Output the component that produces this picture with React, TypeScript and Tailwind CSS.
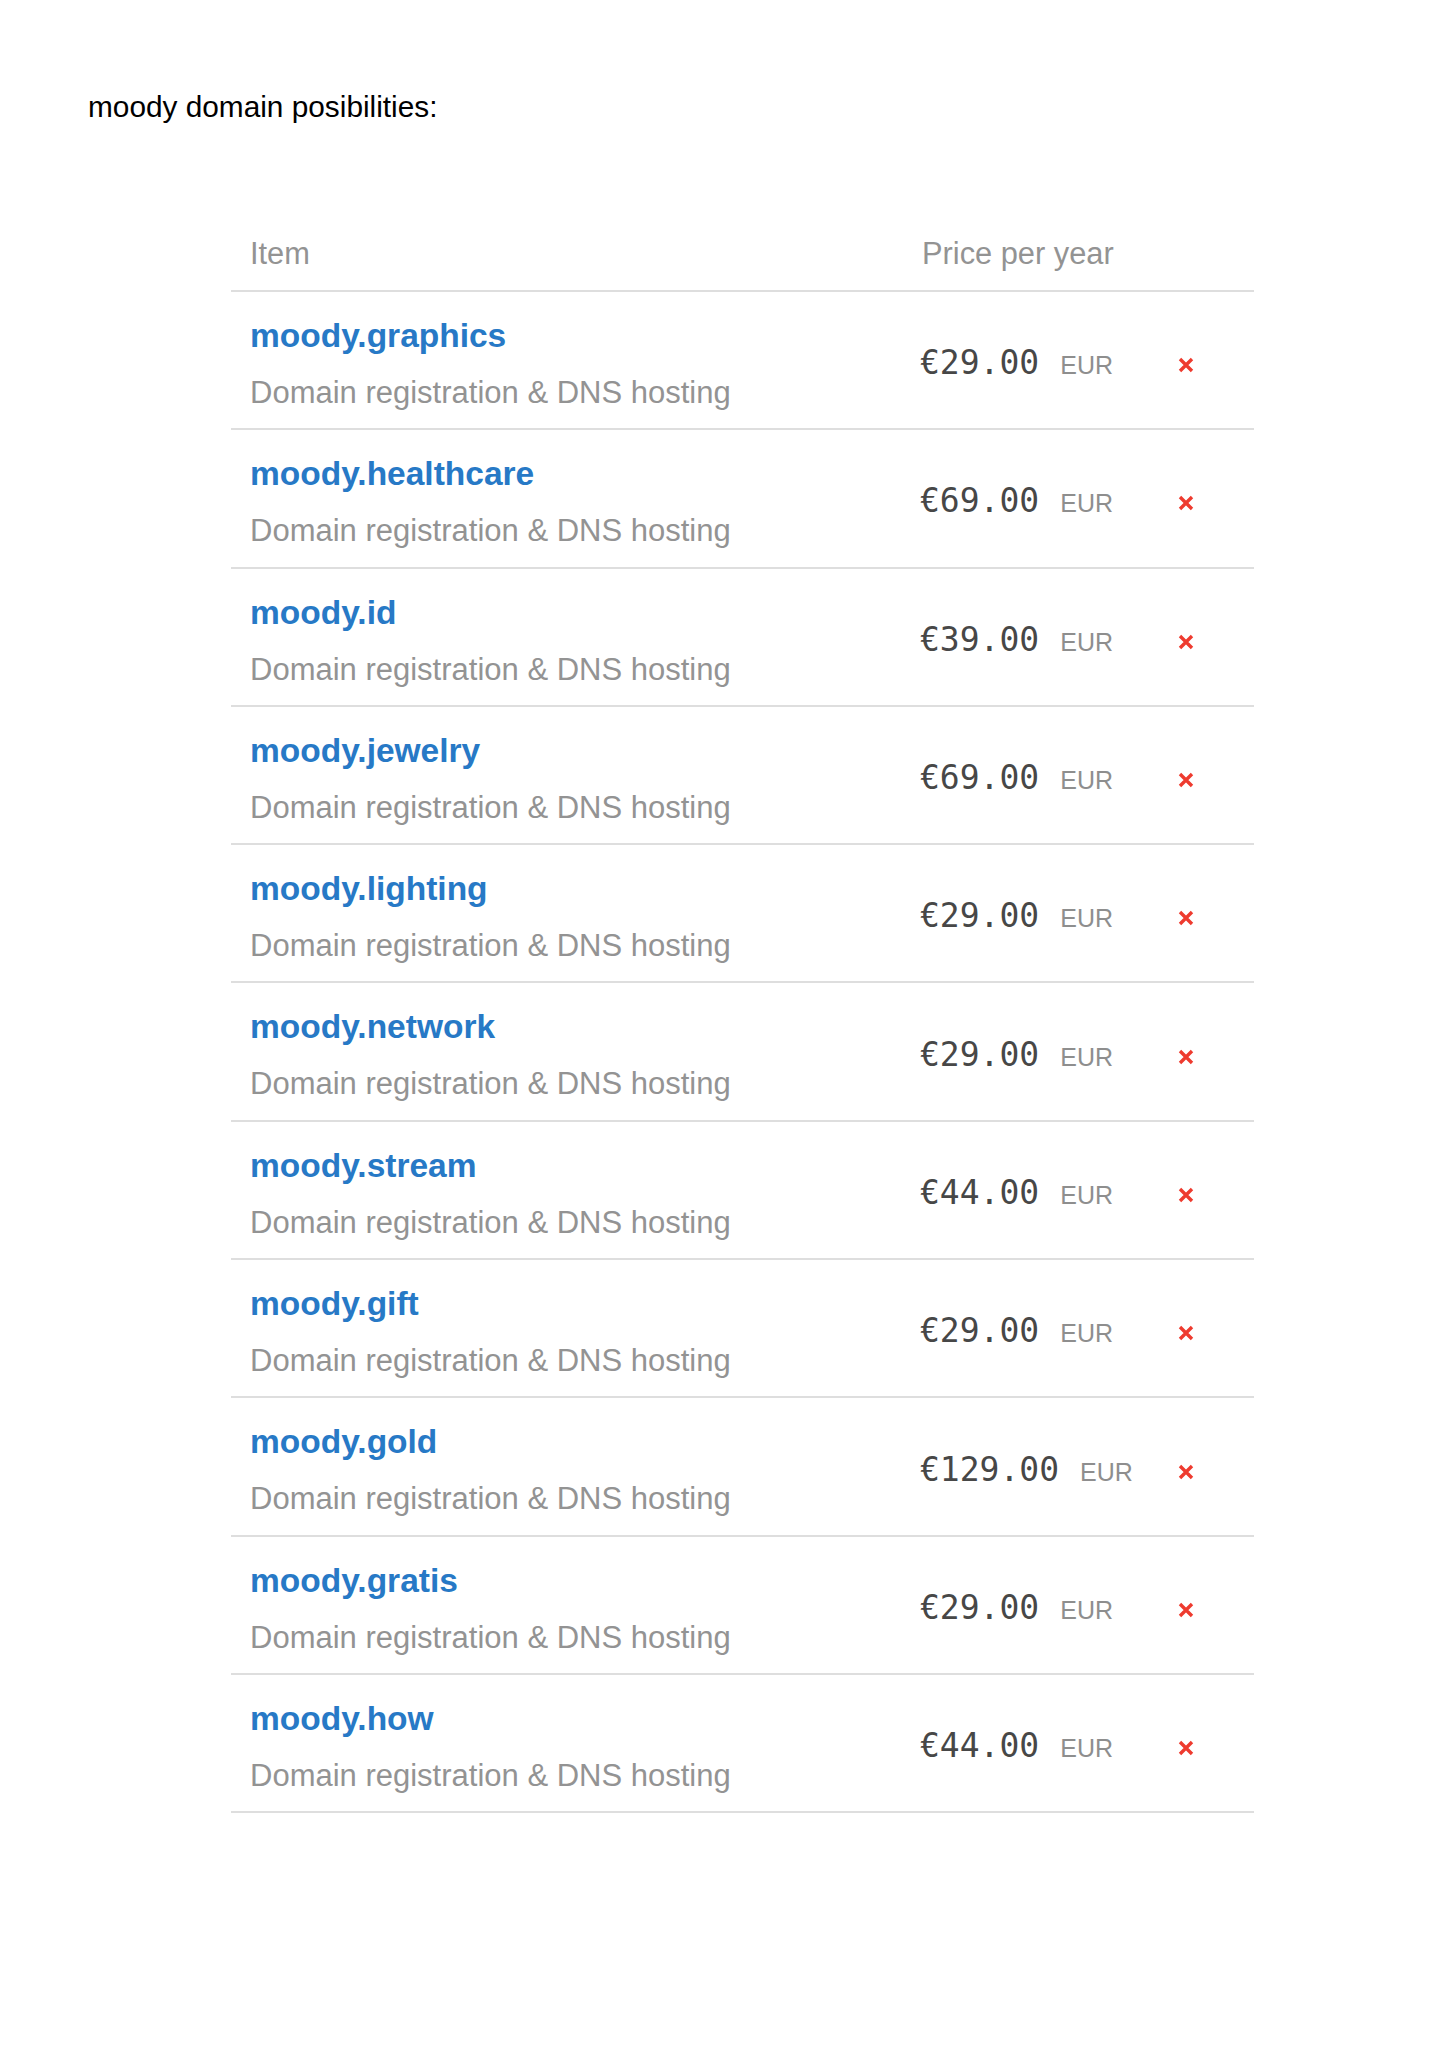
const domains = [
  { name: "moody.graphics", price: "€29.00" },
  { name: "moody.healthcare", price: "€69.00" },
  { name: "moody.id", price: "€39.00" },
  { name: "moody.jewelry", price: "€69.00" },
  { name: "moody.lighting", price: "€29.00" },
  { name: "moody.network", price: "€29.00" },
  { name: "moody.stream", price: "€44.00" },
  { name: "moody.gift", price: "€29.00" },
  { name: "moody.gold", price: "€129.00" },
  { name: "moody.gratis", price: "€29.00" },
  { name: "moody.how", price: "€44.00" },
];

function RemoveIcon() {
  return (
    <svg width="16" height="16" viewBox="0 0 16 16" className="text-[#ee3b2f]">
      <path d="M2 2 L14 14 M14 2 L2 14" stroke="currentColor" strokeWidth="3.4" strokeLinecap="butt" />
    </svg>
  );
}

function DomainRow({ name, price }: { name: string; price: string }) {
  return (
    <div className="flex h-[138.3px] border-b-2 border-[#dedede]">
      <div className="flex-1 pl-[19px] pt-[25px]">
        <p className="text-[33.5px] leading-[38px] font-bold text-[#2779c6]">{name}</p>
        <p className="mt-[20px] text-[31px] leading-[36px] text-[#939393]">
          Domain registration &amp; DNS hosting
        </p>
      </div>
      <div className="w-[258px] flex items-center">
        <div className="mt-[5px] flex items-baseline gap-[21px]">
          <span className="font-['DejaVu_Sans_Mono',monospace] text-[33px] leading-none text-[#474747]">
            {price}
          </span>
          <span className="text-[25px] leading-none text-[#8e8e8e]">EUR</span>
        </div>
      </div>
      <div className="w-[76px] flex items-center">
        <div className="mt-[10px] cursor-pointer">
          <RemoveIcon />
        </div>
      </div>
    </div>
  );
}

export default function App() {
  return (
    <div className="min-h-[2048px] bg-white font-['Liberation_Sans',Arial,sans-serif]">
      <p className="pt-[90px] pl-[88px] text-[29.8px] leading-[34px] text-black">
        moody domain posibilities:
      </p>
      <div className="ml-[231px] mt-[112px] w-[1023px]">
        <div className="flex border-b-2 border-[#dedede] pb-[18px]">
          <div className="flex-1 pl-[19px] text-[30.8px] leading-[36px] text-[#939393]">Item</div>
          <div className="w-[332px] text-[30.8px] leading-[36px] text-[#939393]">Price per year</div>
        </div>
        {domains.map((d) => (
          <DomainRow key={d.name} name={d.name} price={d.price} />
        ))}
      </div>
    </div>
  );
}
